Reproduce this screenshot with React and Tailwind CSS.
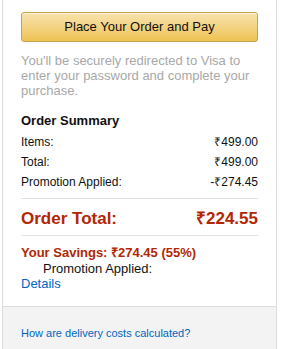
export default function App() {
  return (
    <div className="w-[285px] h-[349px] overflow-hidden bg-white" style={{ fontFamily: '"Liberation Sans", Arial, sans-serif' }}>
      <div className="ml-[2px] w-[275px] border-x border-[#dddddd] bg-white">
        <div className="px-[18px] pt-[12px] pb-[15px]">
          <button className="w-full h-[30px] rounded-[3px] border border-[#c4a44a] bg-gradient-to-b from-[#f8e3ad] to-[#eec251] text-[13px] text-[#111111] shadow-[inset_0_1px_0_rgba(255,255,255,0.6)]">
            Place Your Order and Pay
          </button>
          <p className="mt-[11px] text-[13px] leading-[15px] text-[#a8a8a8]">
            You'll be securely redirected to Visa to enter your password and complete your purchase.
          </p>
          <div className="mt-[13px] text-[13px] font-bold leading-[20px] text-[#111111]">Order Summary</div>
          <div className="text-[12px] leading-[20px] text-[#111111]">
            <div className="flex justify-between pt-[1px]"><span>Items:</span><span>₹499.00</span></div>
            <div className="flex justify-between"><span>Total:</span><span>₹499.00</span></div>
            <div className="flex justify-between"><span>Promotion Applied:</span><span>-₹274.45</span></div>
          </div>
          <div className="mt-[6px] border-t border-[#e3e3e3]"></div>
          <div className="flex justify-between items-center h-[36px] pt-[3px] text-[17px] font-bold text-[#b12704]">
            <span>Order Total:</span><span>₹224.55</span>
          </div>
          <div className="border-t border-[#e3e3e3]"></div>
          <div className="mt-[8px] text-[13px] font-bold leading-[17px] text-[#b12704]">Your Savings: ₹274.45 (55%)</div>
          <div className="pl-[22px] text-[13px] leading-[16px] text-[#111111]">Promotion Applied:</div>
          <div className="-mt-[1px] text-[13px] leading-[15px] text-[#0066c0]">Details</div>
        </div>
        <div className="border-t border-[#dddddd] bg-[#f3f3f3] px-[18px] pt-[19px] pb-[20px] text-[11px] leading-[14px] text-[#0066c0]">
          How are delivery costs calculated?
        </div>
      </div>
    </div>
  );
}
